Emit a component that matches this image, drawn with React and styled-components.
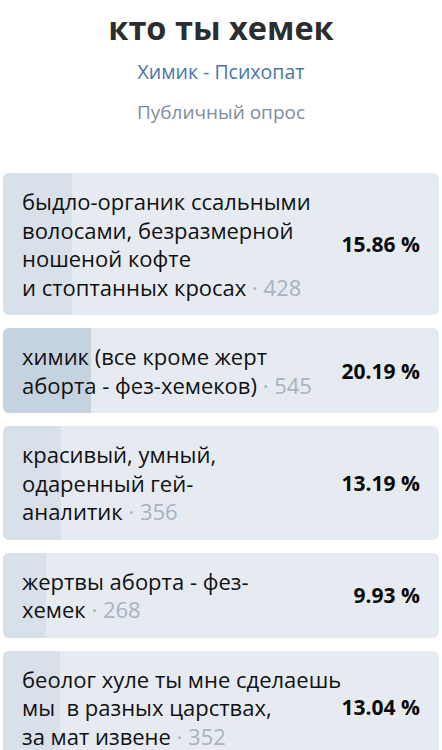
import styled, { createGlobalStyle } from 'styled-components';

const GlobalStyle = createGlobalStyle`
  body {
    margin: 0;
    background: #fff;
    font-family: 'Open Sans', 'Noto Sans', sans-serif;
  }
`;

const options = [
  { lines: ['быдло-органик ссальными', 'волосами, безразмерной', 'ношеной кофте', 'и стоптанных кросах'], votes: 428, percent: 15.86 },
  { lines: ['химик (все кроме жерт', 'аборта - фез-хемеков)'], votes: 545, percent: 20.19, leader: true },
  { lines: ['красивый, умный,', 'одаренный гей-', 'аналитик'], votes: 356, percent: 13.19 },
  { lines: ['жертвы аборта - фез-', 'хемек'], votes: 268, percent: 9.93 },
  { lines: ['беолог хуле ты мне сделаешь', 'мы\u00a0 в разных царствах,', 'за мат извене'], votes: 352, percent: 13.04 },
];

function App() {
  return (
    <Page>
      <GlobalStyle />
      <Header>
        <Title>кто ты хемек</Title>
        <Author>Химик - Психопат</Author>
        <Kind>Публичный опрос</Kind>
      </Header>
      <List>
        {options.map((opt, i) => (
          <Option key={i}>
            <Fill $leader={opt.leader} style={{ width: `${opt.percent}%` }} />
            <Label>
              {opt.lines.map((line, j) => (
                <Line key={j}>
                  {line}
                  {j === opt.lines.length - 1 && <Votes> · {opt.votes}</Votes>}
                </Line>
              ))}
            </Label>
            <Percent>{opt.percent.toFixed(2)} %</Percent>
          </Option>
        ))}
      </List>
    </Page>
  );
}

export default App;

const Page = styled.div`
  width: 442px;
  height: 750px;
  overflow: hidden;
`;

const Header = styled.div`
  display: flex;
  flex-direction: column;
  align-items: center;
  padding-top: 8px;
  margin-bottom: 49px;
`;

const Title = styled.h1`
  margin: 0;
  font-size: 32.5px;
  line-height: 40px;
  font-weight: 700;
  color: #2c2d2e;
`;

const Author = styled.div`
  margin-top: 12px;
  font-size: 19.5px;
  line-height: 24px;
  color: #4a76a8;
`;

const Kind = styled.div`
  margin-top: 16px;
  font-size: 19px;
  line-height: 24px;
  color: #818c99;
`;

const List = styled.div`
  display: flex;
  flex-direction: column;
  gap: 13px;
  padding: 0 3px;
`;

const Option = styled.div`
  position: relative;
  overflow: hidden;
  display: flex;
  align-items: center;
  padding: 14px 19px 14px 19px;
  border-radius: 6px;
  background: #e5ebf1;
`;

const Fill = styled.div`
  position: absolute;
  left: 0;
  top: 0;
  bottom: 0;
  background: ${(p) => (p.$leader ? '#c5d3e0' : '#d8e0ea')};
`;

const Label = styled.div`
  position: relative;
  flex: 1;
  min-width: 0;
  font-size: 22px;
  line-height: 28.5px;
  color: #111;
`;

const Line = styled.div`
  white-space: nowrap;
`;

const Votes = styled.span`
  color: #a8b3bf;
`;

const Percent = styled.div`
  position: relative;
  flex-shrink: 0;
  margin-left: 8px;
  font-size: 21px;
  font-weight: 700;
  color: #0a0a0a;
  white-space: nowrap;
`;
